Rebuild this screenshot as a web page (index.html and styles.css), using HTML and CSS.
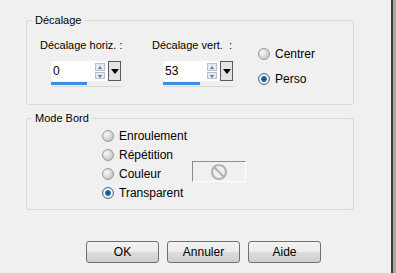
FILE: index.html
```html
<!DOCTYPE html>
<html lang="fr">
  <head>
    <meta charset="UTF-8" />
    <title>Décalage</title>
    <link rel="stylesheet" href="styles.css">
  </head>
  <body>
    <div class="window">
      <fieldset class="group">
        <legend>Décalage</legend>
        <div class="offset">
          <div class="field">
            <div class="label">Décalage horiz. :</div>
            <div class="spin">
              <div class="spin-box">
                <span class="value">0</span>
                <span class="arrows"><i class="up"></i><i class="down"></i></span>
                <span class="drop"></span>
              </div>
              <div class="slider"><span class="fill" style="width: 36px"></span></div>
            </div>
          </div>
          <div class="field">
            <div class="label">Décalage vert. &nbsp;:</div>
            <div class="spin">
              <div class="spin-box">
                <span class="value">53</span>
                <span class="arrows"><i class="up"></i><i class="down"></i></span>
                <span class="drop"></span>
              </div>
              <div class="slider"><span class="fill" style="width: 37px"></span></div>
            </div>
          </div>
          <div class="radios side">
            <label class="radio"><span class="dot"></span>Centrer</label>
            <label class="radio checked"><span class="dot"></span>Perso</label>
          </div>
        </div>
      </fieldset>

      <fieldset class="group second">
        <legend>Mode Bord</legend>
        <div class="border-mode">
          <div class="radios list">
            <label class="radio"><span class="dot"></span>Enroulement</label>
            <label class="radio"><span class="dot"></span>Répétition</label>
            <label class="radio"><span class="dot"></span>Couleur</label>
            <label class="radio checked"><span class="dot"></span>Transparent</label>
          </div>
          <div class="swatch">
            <svg width="20" height="20" viewBox="0 0 20 20">
              <circle cx="10" cy="10" r="7" fill="none" stroke="#b4b4b4" stroke-width="2.2" />
              <line x1="5.2" y1="5.2" x2="14.8" y2="14.8" stroke="#b4b4b4" stroke-width="2.2" />
            </svg>
          </div>
        </div>
      </fieldset>

      <div class="buttons">
        <button class="btn">OK</button>
        <button class="btn">Annuler</button>
        <button class="btn">Aide</button>
      </div>
    </div>
  </body>
</html>
```

FILE: styles.css
```css
body {
  margin: 0;
  padding: 0;
  background-color: #a8a8a8;
  font-family: "Liberation Sans", Arial, sans-serif;
  font-size: 11px;
  color: #000;
  width: 396px;
  height: 273px;
  overflow: hidden;
}

.window {
  width: 393px;
  height: 273px;
  box-sizing: border-box;
  background-color: #f0f0f0;
  border-right: 2px solid #3a3a3a;
  padding: 13px 0 0 26px;
}

.group {
  margin: 0;
  width: 328px;
  box-sizing: border-box;
  border: 1px solid #dadada;
  border-radius: 3px;
  padding: 0;
}

.group legend {
  margin-left: 5px;
  padding: 0 3px 0 3px;
  line-height: 14px;
}

.offset {
  height: 77px;
  box-sizing: border-box;
  display: grid;
  grid-template-columns: 112px 106px auto;
  padding: 12px 0 0 13px;
}

.field .label {
  height: 22px;
}

.spin {
  margin-left: 11px;
  width: 70px;
}

.spin-box {
  display: flex;
  height: 20px;
  background-color: #fff;
}

.spin-box .value {
  flex: 1;
  padding: 3px 0 0 2px;
  line-height: 14px;
  font-size: 12px;
}

.arrows {
  width: 10px;
  display: flex;
  flex-direction: column;
  padding: 2px 1px 2px 0;
  gap: 1px;
}

.arrows i {
  flex: 1;
  border: 1px solid #b8bfd0;
  background-color: #e6e9f1;
  position: relative;
}

.arrows i::after {
  content: "";
  position: absolute;
  left: 2px;
  top: 2px;
  border-left: 2px solid transparent;
  border-right: 2px solid transparent;
}

.arrows .up::after {
  border-bottom: 3px solid #6a7390;
}

.arrows .down::after {
  border-top: 3px solid #6a7390;
}

.drop {
  width: 11px;
  margin-left: 2px;
  border: 1px solid #5a5a5a;
  background-color: #e4e4e4;
  position: relative;
}

.drop::after {
  content: "";
  position: absolute;
  left: 2px;
  top: 7px;
  border-left: 4px solid transparent;
  border-right: 4px solid transparent;
  border-top: 5px solid #000;
}

.slider {
  height: 4px;
  margin-top: 1px;
  border-bottom: 1px solid #d8d8d8;
}

.slider .fill {
  display: block;
  height: 3px;
  background-color: #3d8ee0;
}

.radios {
  display: flex;
  flex-direction: column;
}

.side {
  padding-top: 8px;
  gap: 12px;
  font-size: 12px;
}

.radio {
  display: flex;
  align-items: center;
  gap: 5px;
  height: 13px;
  white-space: nowrap;
}

.dot {
  flex: none;
  width: 12px;
  height: 12px;
  border-radius: 50%;
  border: 1px solid #9a9a9a;
  background: radial-gradient(circle at 35% 35%, #fafafa, #c4c4c4 80%);
  box-sizing: border-box;
}

.checked .dot {
  border-color: #5a6f84;
  background: radial-gradient(circle, #0d3f6e 0, #2a78b8 2.6px, #ffffff 3.4px, #f0f0f0 4px, #b9c4cf 5.5px);
}

.second {
  margin-top: 6px;
}

.border-mode {
  height: 84px;
  box-sizing: border-box;
  display: flex;
  padding: 4px 0 0 75px;
}

.list {
  flex: none;
  width: 75px;
  gap: 6px;
  font-size: 12px;
}

.swatch {
  width: 54px;
  height: 21px;
  box-sizing: border-box;
  margin: 32px 0 0 15px;
  border-top: 1px solid #8c8c8c;
  border-left: 1px solid #8c8c8c;
  border-right: 1px solid #ffffff;
  border-bottom: 1px solid #ffffff;
  display: flex;
  align-items: center;
  justify-content: center;
}

.buttons {
  display: flex;
  gap: 8px;
  margin: 31px 0 0 60px;
}

.btn {
  width: 73px;
  height: 22px;
  font-family: inherit;
  font-size: 12px;
  color: #000;
  border: 1px solid #707070;
  border-radius: 3px;
  background: linear-gradient(#f2f2f2 0, #ebebeb 50%, #dddddd 51%, #cfcfcf 100%);
  padding: 0;
}
```
